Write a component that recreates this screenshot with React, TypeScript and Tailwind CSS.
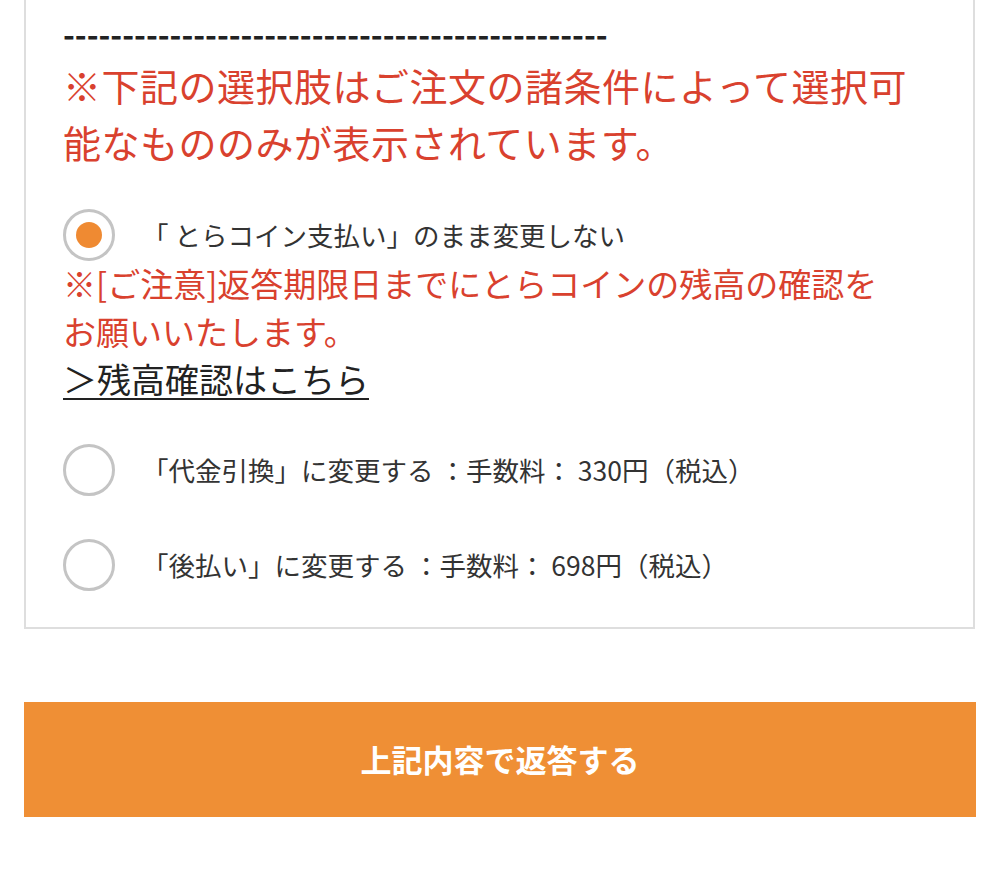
import React from "react";

function Radio({ checked }: { checked?: boolean }) {
  return (
    <div className="w-[52px] h-[52px] shrink-0 rounded-full border-[3px] border-[#c4c4c4] flex items-center justify-center bg-white">
      {checked && <div className="w-[26px] h-[26px] rounded-full bg-[#ef8a32]" />}
    </div>
  );
}

export default function App() {
  return (
    <div
      className="w-[999px] h-[886px] bg-white overflow-hidden"
      style={{ fontFamily: '"Noto Sans CJK JP", "Noto Sans", sans-serif' }}
    >
      <div className="mx-[24px] border-x-[2px] border-b-[2px] border-[#dedede] px-[37px] pb-[36px]">
        <div className="text-[#222] text-[32px] font-bold leading-[30px] pt-[18px] whitespace-nowrap">
          {"-".repeat(46)}
        </div>
        <p className="text-[#d9412e] text-[38px] leading-[57px] mt-[8px] tracking-[0.5px]">
          ※下記の選択肢はご注文の諸条件によって選択可能なもののみが表示されています。
        </p>
        <div className="mt-[39px] flex items-center">
          <Radio checked />
          <span className="ml-[27px] text-[#333] text-[26.5px] leading-[36px]">
            「 とらコイン支払い」のまま変更しない
          </span>
        </div>
        <p className="text-[#d9412e] text-[33px] leading-[48px] -mt-[2px] max-w-[840px]">
          ※[ご注意]返答期限日までにとらコインの残高の確認をお願いいたします。
        </p>
        <a className="inline-block text-[#222] text-[34px] leading-[48px] underline underline-offset-[5px] decoration-[2px]">
          ＞残高確認はこちら
        </a>
        <div className="mt-[41px] flex items-center">
          <Radio />
          <span className="ml-[27px] text-[#333] text-[26.5px] leading-[36px]">
            「代金引換」に変更する ：手数料： 330円（税込）
          </span>
        </div>
        <div className="mt-[43px] flex items-center">
          <Radio />
          <span className="ml-[27px] text-[#333] text-[26.5px] leading-[36px]">
            「後払い」に変更する ：手数料： 698円（税込）
          </span>
        </div>
      </div>
      <button className="mt-[73px] mx-[24px] w-[952px] h-[115px] bg-[#ef8f35] text-white text-[31px] font-bold flex items-center justify-center">
        上記内容で返答する
      </button>
    </div>
  );
}
